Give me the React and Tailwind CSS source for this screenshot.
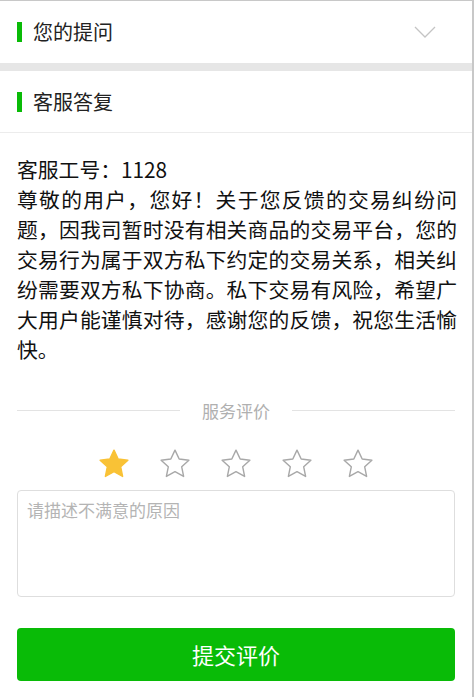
import React from 'react';

const font = { fontFamily: '"Noto Sans CJK SC", "Noto Sans", sans-serif' };

function Star({ filled }) {
  return (
    <svg width="34" height="34" viewBox="0 0 24 24">
      <path
        d="M12 2.2l2.95 6.3 6.85.8-5.07 4.7 1.35 6.8L12 17.4l-6.08 3.4 1.35-6.8L2.2 9.3l6.85-.8z"
        fill={filled ? '#f9c236' : 'none'}
        stroke={filled ? '#f9c236' : '#a8a8a8'}
        strokeWidth="1"
        strokeLinejoin="round"
      />
    </svg>
  );
}

function SectionHeader({ title, chevron, bordered }) {
  return (
    <div className={'flex h-[62px] items-center pl-[17px] pr-[36px] ' + (bordered ? 'border-b border-[#ececec]' : '')}>
      <span className="h-[20px] w-[5px] bg-[#09bb07]" />
      <span className="ml-[11px] flex-1 text-[20px] text-[#222]">{title}</span>
      {chevron && (
        <svg width="22" height="12" viewBox="0 0 22 12">
          <path d="M1 1l10 10 10-10" fill="none" stroke="#c4c4c4" strokeWidth="1.3" />
        </svg>
      )}
    </div>
  );
}

export default function App() {
  return (
    <div className="min-h-[697px] w-[474px] border-r-2 border-t border-[#c8c8c8] bg-white" style={font}>
      <SectionHeader title="您的提问" chevron />
      <div className="h-[8px] bg-[#e6e6e6]" />
      <SectionHeader title="客服答复" bordered />

      <div className="pl-[17px] pr-[15px] pt-[21px] text-justify text-[20.8px] leading-[30px] text-[#111]">
        <p>客服工号：1128</p>
        <p>
          尊敬的用户，您好！关于您反馈的交易纠纷问题，因我司暂时没有相关商品的交易平台，您的交易行为属于双方私下约定的交易关系，相关纠纷需要双方私下协商。私下交易有风险，希望广大用户能谨慎对待，感谢您的反馈，祝您生活愉快。
        </p>
      </div>

      <div className="mt-[34px] flex items-center px-[17px]">
        <div className="h-px flex-1 bg-[#e3e3e3]" />
        <span className="px-[22px] text-[17px] text-[#b0b0b0]">服务评价</span>
        <div className="h-px flex-1 bg-[#e3e3e3]" />
      </div>

      <div className="mt-[23px] flex justify-center gap-[27px]">
        <Star filled />
        <Star />
        <Star />
        <Star />
        <Star />
      </div>

      <div className="mx-[17px] mt-[9px] h-[107px] rounded-[4px] border border-[#dedede] px-[9px] py-[6px] text-[17px] text-[#b4b4b4]">
        请描述不满意的原因
      </div>

      <div className="mx-[17px] mt-[31px] flex h-[53px] items-center justify-center rounded-[4px] bg-[#09bb07] text-[22px] text-white">
        提交评价
      </div>
    </div>
  );
}
